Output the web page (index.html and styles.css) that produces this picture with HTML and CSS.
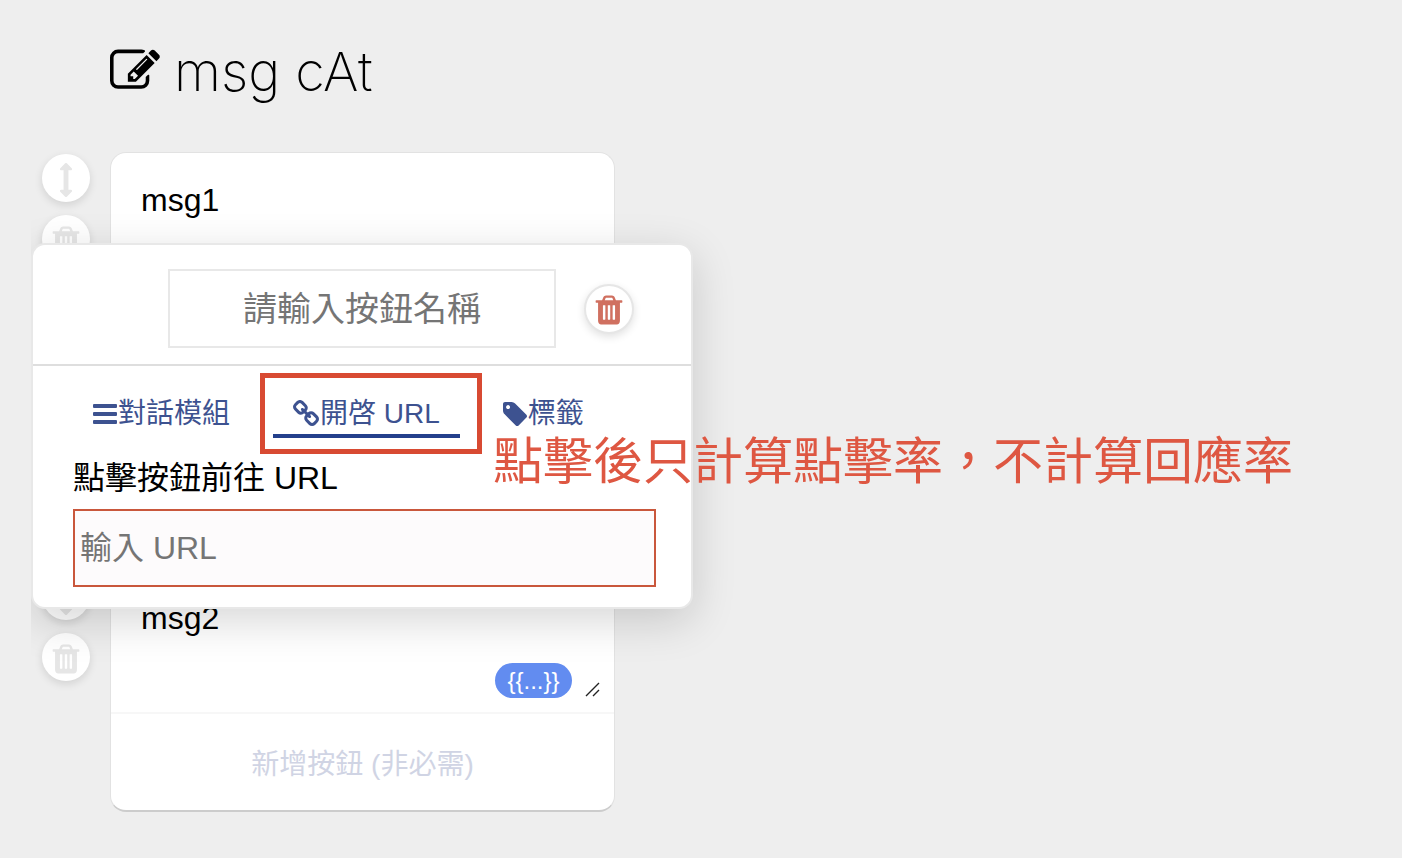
FILE: index.html
```html
<!DOCTYPE html>
<html lang="zh-Hant">
<head>
<meta charset="utf-8">
<title>msg cAt</title>
<link rel="stylesheet" href="styles.css">
</head>
<body>
<svg class="sprite" aria-hidden="true">
  <symbol id="edit" viewBox="0 0 1792 1792"><path d="M888 1184l116-116-152-152-116 116v56h96v96h56zm440-720q-16-16-33 1l-350 350q-17 17-1 33t33-1l350-350q17-17 1-33zm80 594v190q0 119-84.5 203.5t-203.5 84.5h-832q-119 0-203.5-84.5t-84.5-203.5v-832q0-119 84.5-203.5t203.5-84.5h832q63 0 117 25 15 7 18 23 3 17-9 29l-49 49q-14 14-32 8-23-6-45-6h-832q-66 0-113 47t-47 113v832q0 66 47 113t113 47h832q66 0 113-47t47-113v-126q0-13 9-22l64-64q15-15 35-7t20 29zm-96-738l288 288-672 672h-288v-288zm444 132l-92 92-288-288 92-92q28-28 68-28t68 28l152 152q28 28 28 68t-28 68z"/></symbol>
  <symbol id="trash" viewBox="0 0 1792 1792"><path d="M704 1376v-704q0-14-9-23t-23-9h-64q-14 0-23 9t-9 23v704q0 14 9 23t23 9h64q14 0 23-9t9-23zm256 0v-704q0-14-9-23t-23-9h-64q-14 0-23 9t-9 23v704q0 14 9 23t23 9h64q14 0 23-9t9-23zm256 0v-704q0-14-9-23t-23-9h-64q-14 0-23 9t-9 23v704q0 14 9 23t23 9h64q14 0 23-9t9-23zm-544-992h448l-48-117q-7-9-17-11h-317q-10 2-17 11zm928 32v64q0 14-9 23t-23 9h-96v948q0 83-47 143.5t-113 60.5h-832q-66 0-113-58.5t-47-141.5v-952h-96q-14 0-23-9t-9-23v-64q0-14 9-23t23-9h309l70-167q15-37 54-63t79-26h320q40 0 79 26t54 63l70 167h309q14 0 23 9t9 23z"/></symbol>
  <symbol id="move" viewBox="0 0 1792 1792"><path d="M1216 320q0 26-19 45t-45 19h-128v1024h128q26 0 45 19t19 45-19 45l-256 256q-19 19-45 19t-45-19l-256-256q-19-19-19-45t19-45 45-19h128v-1024h-128q-26 0-45-19t-19-45 19-45l256-256q19-19 45-19t45 19l256 256q19 19 19 45z"/></symbol>
  <symbol id="bars" viewBox="0 0 24 28"><path d="M1 4h22a1 1 0 0 1 1 1v2a1 1 0 0 1-1 1H1a1 1 0 0 1-1-1V5a1 1 0 0 1 1-1zM1 12h22a1 1 0 0 1 1 1v2a1 1 0 0 1-1 1H1a1 1 0 0 1-1-1v-2a1 1 0 0 1 1-1zM1 20h22a1 1 0 0 1 1 1v2a1 1 0 0 1-1 1H1a1 1 0 0 1-1-1v-2a1 1 0 0 1 1-1z"/></symbol>
  <symbol id="link" viewBox="80 80 1632 1632"><path d="M1520 1216q0-40-28-68l-208-208q-28-28-68-28-42 0-72 32 3 3 19 18.5t21.5 21.5 15 19 13 25.5 3.5 27.5q0 40-28 68t-68 28q-15 0-27.5-3.5t-25.5-13-19-15-21.5-21.5-18.5-19q-33 31-33 73 0 40 28 68l206 207q27 27 68 27 40 0 68-26l147-146q28-28 28-67zm-703-705q0-40-28-68l-206-207q-28-28-68-28-39 0-68 27l-147 146q-28 28-28 67 0 40 28 68l208 208q27 27 68 27 42 0 72-31-3-3-19-18.5t-21.5-21.5-15-19-13-25.5-3.5-27.5q0-40 28-68t68-28q15 0 27.5 3.5t25.5 13 19 15 21.5 21.5 18.5 19q33-31 33-73zm895 705q0 120-85 203l-147 146q-83 83-203 83-121 0-204-85l-206-207q-83-83-83-203 0-123 88-209l-88-88q-86 88-208 88-120 0-204-84l-208-208q-84-84-84-204t85-203l147-146q83-83 203-83 121 0 204 85l206 207q83 83 83 203 0 123-88 209l88 88q86-88 208-88 120 0 204 84l208 208q84 84 84 204z"/></symbol>
  <symbol id="tag" viewBox="128 128 1515 1515"><path d="M576 448q0-53-37.5-90.5t-90.5-37.5-90.5 37.5-37.5 90.5 37.5 90.5 90.5 37.5 90.5-37.5 37.5-90.5zm1067 576q0 53-37 90l-491 492q-39 37-91 37-53 0-90-37l-715-716q-38-37-64.5-101t-26.5-117v-416q0-52 38-90t90-38h416q53 0 117 26.5t102 64.5l715 714q37 39 37 91z"/></symbol>
</svg>

<header class="title">
  <svg class="title-icon" aria-hidden="true"><use href="#edit"/></svg>
  <h1 class="title-text">msg cAt</h1>
</header>

<main class="board">
  <section class="row row-first">
    <div class="tools">
      <button class="round" aria-label="移動"><svg class="round-icon"><use href="#move"/></svg></button>
      <button class="round" aria-label="刪除"><svg class="round-icon"><use href="#trash"/></svg></button>
    </div>
    <article class="card">
      <textarea class="message" aria-label="訊息 1">msg1</textarea>
    </article>
  </section>

  <section class="row">
    <div class="tools">
      <button class="round" aria-label="移動"><svg class="round-icon"><use href="#move"/></svg></button>
      <button class="round" aria-label="刪除"><svg class="round-icon"><use href="#trash"/></svg></button>
    </div>
    <article class="card">
      <div class="editor">
        <textarea class="message" aria-label="訊息 2">msg2</textarea>
        <div class="corner">
          <button class="variable">{{...}}</button>
          <svg class="grip" viewBox="0 0 16 16" aria-hidden="true"><path d="M1 14 14 1M8 14l6-6"/></svg>
        </div>
      </div>
      <button class="add">新增按鈕 (非必需)</button>
    </article>
  </section>

  <div class="popover" role="dialog" aria-label="按鈕設定">
    <div class="popover-head">
      <input class="name" type="text" placeholder="請輸入按鈕名稱" aria-label="按鈕名稱">
      <button class="round round-danger" aria-label="刪除按鈕"><svg class="round-icon"><use href="#trash"/></svg></button>
    </div>
    <div class="popover-body">
      <nav class="tabs">
        <button class="tab"><svg class="tab-icon"><use href="#bars"/></svg>對話模組</button>
        <button class="tab tab-active"><svg class="tab-icon tab-icon-link"><use href="#link"/></svg>開啓 URL</button>
        <button class="tab"><svg class="tab-icon"><use href="#tag"/></svg>標籤</button>
      </nav>
      <label class="url-label" for="url">點擊按鈕前往 URL</label>
      <input class="url" id="url" type="text" placeholder="輸入 URL">
    </div>
    <p class="note">點擊後只計算點擊率，不計算回應率</p>
  </div>
</main>
</body>
</html>
```

FILE: styles.css
```css
* {
  box-sizing: border-box;
}

body {
  margin: 0;
  background: #eee;
  color: #000;
  font-family: "Liberation Sans", "Noto Sans CJK TC", sans-serif;
  font-size: 32px;
}

button,
input,
textarea {
  margin: 0;
  padding: 0;
  border: 0;
  background: none;
  color: inherit;
  font: inherit;
}

svg {
  fill: currentColor;
}

.sprite {
  position: absolute;
  width: 0;
  height: 0;
}

.title {
  display: flex;
  align-items: center;
  gap: 14px;
  height: 152px;
  padding: 0 110px 10px;
}

.title-icon {
  width: 50px;
  height: 50px;
}

.title-text {
  margin: 0;
  font-family: Inter, "Liberation Sans", sans-serif;
  font-size: 54px;
  font-weight: 200;
}

.board {
  position: relative;
  margin-left: 31px;
  padding-bottom: 46px;
  overflow-x: clip;
}

.row {
  display: flex;
  align-items: flex-start;
  gap: 20px;
  padding-left: 11px;
}

.row-first {
  min-height: 418px;
}

.tools {
  display: flex;
  flex-direction: column;
  gap: 13px;
  padding-top: 2px;
}

.round {
  display: flex;
  align-items: center;
  justify-content: center;
  width: 48px;
  height: 48px;
  padding-top: 3px;
  border-radius: 50%;
  background: #fff;
  color: #e6e6e6;
  box-shadow: 0 3px 8px rgba(0, 0, 0, .12);
}

.round-icon {
  width: 34px;
  height: 34px;
}

.card {
  width: 505px;
  overflow: hidden;
  border: 1px solid #e2e2e2;
  border-bottom: 2px solid #ccc;
  border-radius: 16px;
  background: #fff;
}

.message {
  display: block;
  width: 100%;
  height: 141px;
  padding: 27px 30px;
  line-height: 40px;
  resize: none;
}

.editor {
  position: relative;
  border-bottom: 2px solid #f7f7f7;
}

.corner {
  position: absolute;
  right: 13px;
  bottom: 14px;
  display: flex;
  align-items: flex-end;
  gap: 13px;
}

.variable {
  width: 77px;
  height: 35px;
  border-radius: 18px;
  background: #628cf0;
  color: #fff;
  font-size: 24px;
  line-height: 35px;
}

.grip {
  width: 16px;
  height: 16px;
  fill: none;
  stroke: #222;
  stroke-width: 1.4;
}

.add {
  display: block;
  width: 100%;
  height: 96px;
  color: #d0d4e4;
  font-size: 28px;
}

.popover {
  position: absolute;
  top: 91px;
  left: 0;
  width: 662px;
  border: 2px solid #e8e8e8;
  border-radius: 14px;
  background: #fff;
  box-shadow: 0 12px 44px rgba(0, 0, 0, .16);
}

.popover-head {
  display: flex;
  align-items: center;
  justify-content: flex-end;
  gap: 28px;
  padding: 24px 57px 16px;
  border-bottom: 2px solid #dedede;
}

.name {
  width: 388px;
  height: 79px;
  padding-top: 2px;
  border: 2px solid #e8e8e8;
  font-size: 34px;
  text-align: center;
}

.round-danger {
  width: 50px;
  height: 50px;
  border: 2px solid #e6e6e6;
  color: #d07060;
}

.name::placeholder,
.url::placeholder {
  color: #757575;
}

.popover-body {
  display: flex;
  flex-direction: column;
  padding: 28px 35px 20px 40px;
}

.tabs {
  display: flex;
  gap: 23px;
}

.tab {
  position: relative;
  display: flex;
  align-items: center;
  gap: 1px;
  padding: 0 20px;
  border-bottom: 4px solid transparent;
  color: #3d5290;
  font-size: 28px;
  line-height: 40px;
  white-space: nowrap;
}

.tab-active {
  border-bottom-color: #24408c;
}

.tab-active::after {
  content: "";
  position: absolute;
  inset: -21px -22px -20px -13px;
  border: 5px solid #d84a32;
}

.tab-icon {
  width: 24px;
  height: 28px;
}

.tab-icon-link {
  width: 26px;
}

.url-label {
  margin: 16px 0 7px;
  line-height: 48px;
}

.url {
  width: 100%;
  height: 78px;
  padding: 0 5px;
  border: 2px solid #c9573c;
  background: #fdfbfc;
}

.note {
  position: absolute;
  top: 176px;
  left: 460px;
  margin: 0;
  color: #de5742;
  font-family: "Noto Sans CJK TC", sans-serif;
  font-size: 50px;
  font-weight: 400;
  line-height: 72px;
  white-space: nowrap;
}
```
